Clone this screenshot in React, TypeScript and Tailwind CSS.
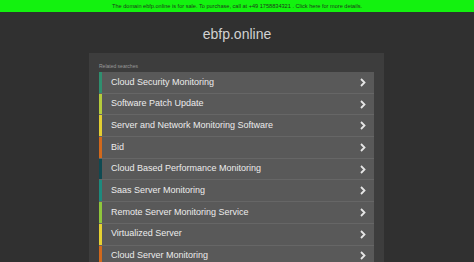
const items = [
  { label: "Cloud Security Monitoring", bar: "bg-[#2f8f6f]" },
  { label: "Software Patch Update", bar: "bg-[#b5cc3c]" },
  { label: "Server and Network Monitoring Software", bar: "bg-[#e3cf32]" },
  { label: "Bid", bar: "bg-[#d2691c]" },
  { label: "Cloud Based Performance Monitoring", bar: "bg-[#0f4a52]" },
  { label: "Saas Server Monitoring", bar: "bg-[#1d8a7e]" },
  { label: "Remote Server Monitoring Service", bar: "bg-[#8fc63c]" },
  { label: "Virtualized Server", bar: "bg-[#e6d232]" },
  { label: "Cloud Server Monitoring", bar: "bg-[#d2691c]" },
];

const Chevron = () => (
  <svg width="6" height="9" viewBox="0 0 6 9" className="shrink-0">
    <path d="M1 1 L4.5 4.5 L1 8" fill="none" stroke="#e6e6e6" strokeWidth="1.8" />
  </svg>
);

export default function App() {
  return (
    <div className="h-[262px] w-[474px] overflow-hidden bg-[#303030] font-['Liberation_Sans',Arial,sans-serif]">
      <div className="flex h-[12px] items-center justify-center bg-[#13f20f] text-[5.6px] text-[#1c3a1a]">
        The domain ebfp.online is for sale. To purchase, call at +49 1758834321 . Click here for more details.
      </div>
      <div className="flex h-[41px] items-center justify-center pt-[4px] text-[14px] text-[#d2d2d2]">
        ebfp.online
      </div>
      <div className="ml-[89px] w-[295px] bg-[#3d3d3d] px-[10px] pt-[10px] pb-[10px]">
        <div className="mb-[2px] text-[5px] leading-[7px] text-[#9a9a9a]">Related searches</div>
        <div className="flex flex-col">
          {items.map((it) => (
            <div
              key={it.label}
              className="flex h-[21.7px] items-stretch border-b border-[#666666] bg-[#595959]"
            >
              <div className={`w-[3px] ${it.bar}`} />
              <div className="flex flex-1 items-center justify-between pl-[9px] pr-[8px]">
                <span className="text-[9px] text-[#ececec]">{it.label}</span>
                <Chevron />
              </div>
            </div>
          ))}
        </div>
      </div>
    </div>
  );
}
